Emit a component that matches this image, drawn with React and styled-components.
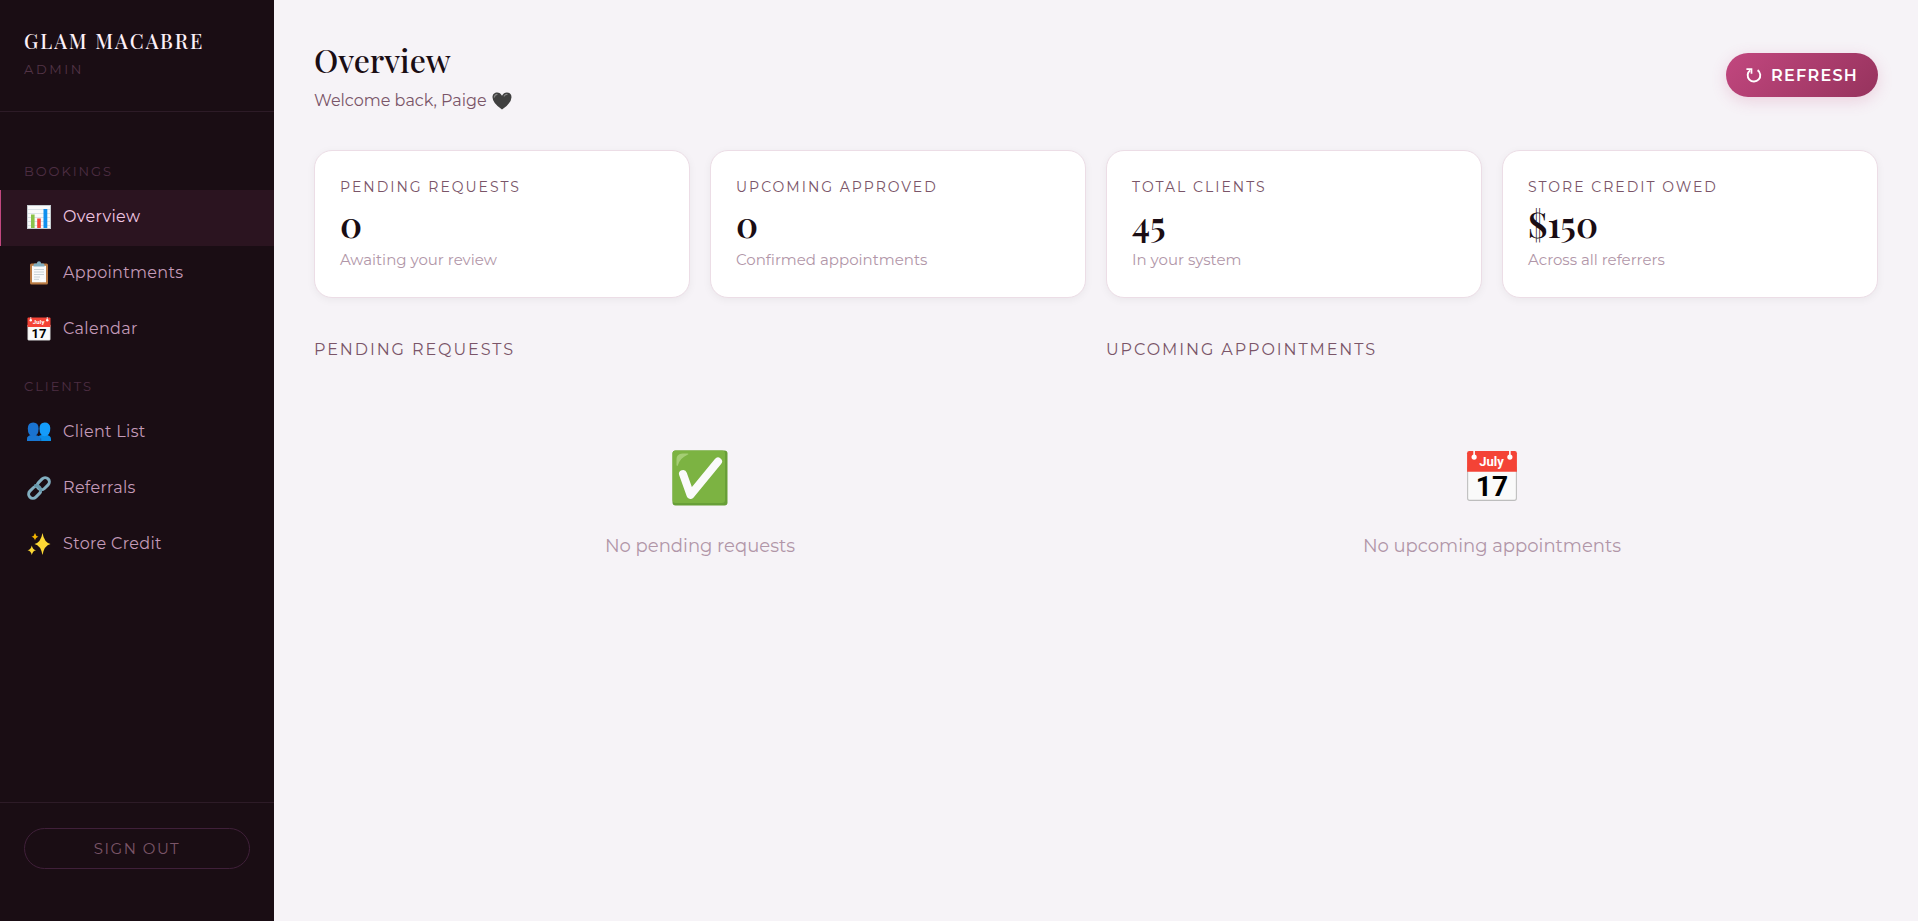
import React, { useState } from 'react'
import styled, { createGlobalStyle } from 'styled-components'

const sans = `Montserrat, Inter, sans-serif`
const serif = `'Playfair Display', 'Liberation Serif', serif`

const ChartIcon = () => (
  <svg viewBox="0 0 24 24" aria-hidden="true">
    <rect x="0.5" y="0.5" width="23" height="23" fill="#fafafa" stroke="#c5ccd0" />
    <path d="M1 4.5h22M1 8.5h22M1 12.5h22M1 16.5h22M1 20.5h22" stroke="#d3dde2" strokeWidth="0.8" />
    <rect x="4" y="9.500" width="3.600" height="13.500" fill="#8bc34a" />
    <rect x="10.200" y="13.500" width="3.600" height="9.500" fill="#f44336" />
    <rect x="16.500" y="4" width="3.800" height="19" fill="#1190ef" />
  </svg>
)

const ClipboardIcon = () => (
  <svg viewBox="0 0 24 24" aria-hidden="true">
    <rect x="3" y="2.500" width="18" height="21" rx="1.500" fill="#b97a43" />
    <rect x="5" y="4.800" width="14" height="16.500" fill="#fafafa" />
    <path d="M7 8.500h10M7 11h10M7 13.500h10M7 16h6M7 18.300h5" stroke="#c3ced3" strokeWidth="0.9" />
    <path d="M14.500 21.300V18h4.500z" fill="#fff" />
    <path d="M6.500 5.500V4q0-1.400 1.700-1.400h1.600q.3-2.300 2.200-2.300t2.200 2.300h1.600q1.700 0 1.700 1.400v1.500z" fill="#82aec0" />
  </svg>
)

const CalendarIcon = () => (
  <svg viewBox="0 0 48 48" aria-hidden="true">
    <path d="M1.500 16h45v28.500a2 2 0 0 1-2 2h-41a2 2 0 0 1-2-2z" fill="#fafafa" stroke="#bdbdbd" strokeWidth="1" />
    <path d="M1 3q0-2 2-2h42q2 0 2 2v17H1z" fill="#f44336" />
    <path d="M7.500 0v6M40.500 0v6" stroke="#fafafa" strokeWidth="1.500" />
    <circle cx="7.500" cy="6.500" r="2.400" fill="#fff" />
    <circle cx="40.500" cy="6.500" r="2.400" fill="#fff" />
    <text x="23.500" y="14.500" textAnchor="middle" fontFamily="Roboto, sans-serif" fontWeight="700" fontSize="12" fill="#fff">July</text>
    <text x="24" y="42.500" textAnchor="middle" fontFamily="Roboto, sans-serif" fontWeight="700" fontSize="26" fill="#000">17</text>
  </svg>
)

const PeopleIcon = () => (
  <svg viewBox="0 0 24 24" aria-hidden="true">
    <path d="M10.500 21v-2.500q0-3 4-3.500 5-1.500 8 1 1.500 1 1.500 3V21z" fill="#0a8de8" />
    <path d="M12.500 8.500q0-6 5.200-6t5.600 5.500q.2 7.800-5.600 8.200-5.200-.2-5.200-7.700z" fill="#149cfa" />
    <path d="M0 21v-2.500q0-2.500 4-3.500h4q5 .8 5.800 3.500V21z" fill="#1976d2" />
    <path d="M.8 8.500q0-6 5.400-6t5.400 6q0 7.700-5.400 7.700T.8 8.500z" fill="#1a73d1" />
    <path d="M13.800 18.500V21" stroke="#14568f" strokeWidth="0.6" />
  </svg>
)

const LinkIcon = () => (
  <svg viewBox="0 0 24 24" aria-hidden="true">
    <g fill="none" strokeLinecap="round" strokeWidth="3">
      <rect x="-4.200" y="-6.800" width="8.400" height="13.600" rx="4.200" transform="translate(7.700 16.300) rotate(45)" stroke="#82aec0" />
      <rect x="-4.200" y="-6.800" width="8.400" height="13.600" rx="4.200" transform="translate(16.300 7.700) rotate(45)" stroke="#82aec0" />
      <path d="M8.500 9.600q4.500.5 5.200 4.900" stroke="#6596aa" />
    </g>
  </svg>
)

const SparklesIcon = () => (
  <svg viewBox="0 0 24 24" aria-hidden="true">
    <path d="M15.500 1Q17.200 10.500 23.500 12 17.200 13.500 15.500 23 13.800 13.500 7.500 12 13.800 10.500 15.500 1z" fill="#fdd835" />
    <path d="M4.800 13.500Q5.600 17.600 9 18.300 5.600 19 4.800 23 4 19 .5 18.300 4 17.600 4.800 13.500z" fill="#fdd835" />
    <path d="M8 1Q8.700 4.200 11.500 4.700 8.700 5.200 8 8.400 7.300 5.200 4.500 4.700 7.300 4.200 8 1z" fill="#f4b400" />
  </svg>
)

const CheckIcon = () => (
  <svg viewBox="0 0 56 56" aria-hidden="true">
    <rect x="0.500" y="0.500" width="55" height="55" rx="3" fill="#689f38" />
    <rect x="0.500" y="0.500" width="52.500" height="52.500" rx="3" fill="#7cb342" />
    <path d="M11 24l7.500 21L46 11.500" fill="none" stroke="#fafafa" strokeWidth="8" strokeLinecap="round" strokeLinejoin="round" />
    <path d="M4.500 15V9q0-5 6-5.500h5q2 .2 0 1.200Q8 8 6 15q-.8 1.800-1.500 0z" fill="#aed581" opacity="0.800" />
  </svg>
)

const HeartIcon = () => (
  <svg viewBox="0 0 20 18" aria-hidden="true">
    <path d="M10 17.500Q.5 11 .5 5.200C.5-.5 8-1.200 10 3.800c2-5 9.500-4.300 9.500 1.400Q19.500 11 10 17.500z" fill="#404040" />
    <path d="M2.300 5.200Q2.800 2.500 5 2.300M12.200 4Q13.300 2.200 15 2.300" fill="none" stroke="#858585" strokeWidth="1.200" strokeLinecap="round" />
  </svg>
)

// open ring with its arrow head at the top left
const RefreshIcon = () => (
  <svg viewBox="0 0 16 16" aria-hidden="true">
    <path d="M4.200 3.200a6.300 6.300 0 1 0 7.400-.1" fill="none" stroke="#fff" strokeWidth="1.900" />
    <path d="M0.400 2.100h5.100v4.600" fill="none" stroke="#fff" strokeWidth="1.700" />
  </svg>
)

const navGroups = [
  {
    title: 'Bookings',
    items: [
      { name: 'Overview', icon: <ChartIcon /> },
      { name: 'Appointments', icon: <ClipboardIcon /> },
      { name: 'Calendar', icon: <CalendarIcon /> },
    ],
  },
  {
    title: 'Clients',
    items: [
      { name: 'Client List', icon: <PeopleIcon /> },
      { name: 'Referrals', icon: <LinkIcon /> },
      { name: 'Store Credit', icon: <SparklesIcon /> },
    ],
  },
]

const stats = [
  { label: 'Pending Requests', value: '0', note: 'Awaiting your review' },
  { label: 'Upcoming Approved', value: '0', note: 'Confirmed appointments' },
  { label: 'Total Clients', value: '45', note: 'In your system' },
  { label: 'Store Credit Owed', value: '$150', note: 'Across all referrers' },
]

export default function App() {
  const [active, setActive] = useState('Overview')

  return (
    <>
      <GlobalStyle />
      <Layout>
        <Sidebar>
          <Brand>
            <BrandName>GLAM MACABRE</BrandName>
            <BrandRole>Admin</BrandRole>
          </Brand>
          <Nav>
            {navGroups.map((group) => (
              <NavGroup key={group.title}>
                <NavTitle>{group.title}</NavTitle>
                {group.items.map((item) => (
                  <NavLink
                    key={item.name}
                    href="#"
                    $active={active === item.name}
                    onClick={() => setActive(item.name)}
                  >
                    {item.icon}
                    {item.name}
                  </NavLink>
                ))}
              </NavGroup>
            ))}
          </Nav>
          <SidebarFooter>
            <SignOutButton type="button">Sign Out</SignOutButton>
          </SidebarFooter>
        </Sidebar>

        <Main>
          <Header>
            <div>
              <Title>Overview</Title>
              <Welcome>Welcome back, Paige <HeartIcon /></Welcome>
            </div>
            <RefreshButton type="button"><RefreshIcon />Refresh</RefreshButton>
          </Header>

          <StatGrid>
            {stats.map((stat) => (
              <StatCard key={stat.label}>
                <StatLabel>{stat.label}</StatLabel>
                <StatValue>{stat.value}</StatValue>
                <StatNote>{stat.note}</StatNote>
              </StatCard>
            ))}
          </StatGrid>

          <Panels>
            <section>
              <SectionTitle>Pending Requests</SectionTitle>
              <EmptyState>
                <EmptyIcon $size={56}><CheckIcon /></EmptyIcon>
                <p>No pending requests</p>
              </EmptyState>
            </section>
            <section>
              <SectionTitle>Upcoming Appointments</SectionTitle>
              <EmptyState>
                <EmptyIcon $size={52}><CalendarIcon /></EmptyIcon>
                <p>No upcoming appointments</p>
              </EmptyState>
            </section>
          </Panels>
        </Main>
      </Layout>
    </>
  )
}

const GlobalStyle = createGlobalStyle`
  * {
    box-sizing: border-box;
    margin: 0;
    padding: 0;
  }
  body {
    background: #f6f3f7;
    font-family: ${sans};
    color: #1a0d14;
  }
  button {
    font-family: inherit;
    cursor: pointer;
  }
`;

const Layout = styled.div`
  display: flex;
  min-height: 100vh;
`;

const Sidebar = styled.aside`
  display: flex;
  flex-direction: column;
  flex: 0 0 274px;
  background: #1a0d14;
`;

const Brand = styled.div`
  padding: 28px 24px 32px;
  border-bottom: 1px solid #2d1b27;
`;

const BrandName = styled.div`
  font-family: ${serif};
  font-size: 20px;
  font-weight: 500;
  line-height: 26px;
  letter-spacing: 2px;
  color: #fdf0f8;
`;

const BrandRole = styled.div`
  margin-top: 5px;
  font-size: 13px;
  line-height: 20px;
  letter-spacing: 0.2em;
  text-transform: uppercase;
  color: #533447;
`;

const Nav = styled.nav`
  flex: 1;
  padding-top: 31px;
`;

const NavGroup = styled.div`
  padding-top: 20px;
`;

const NavTitle = styled.h2`
  padding: 0 24px;
  margin-bottom: 11px;
  font-size: 13px;
  font-weight: 400;
  line-height: 16px;
  letter-spacing: 0.15em;
  text-transform: uppercase;
  color: #4d2e43;
`;

const NavLink = styled.a`
  display: flex;
  align-items: center;
  gap: 12px;
  height: 56px;
  padding: 0 26px 2px;
  border-left: 1px solid ${({ $active }) => ($active ? '#c2477f' : 'transparent')};
  background: ${({ $active }) => ($active ? '#2b1420' : 'transparent')};
  color: ${({ $active }) => ($active ? '#f0c4e0' : '#c49ab8')};
  font-size: 16px;
  line-height: 20px;
  letter-spacing: 0.02em;
  text-decoration: none;
  svg {
    width: 24px;
    height: 24px;
  }
`;

const SidebarFooter = styled.div`
  padding: 25px 24px 52px;
  border-top: 1px solid #2d1b27;
`;

const SignOutButton = styled.button`
  width: 100%;
  height: 41px;
  border: 1px solid #40203a;
  border-radius: 21px;
  background: transparent;
  color: #7a5568;
  font-size: 15px;
  letter-spacing: 0.1em;
  text-transform: uppercase;
`;

const Main = styled.main`
  flex: 1;
  min-width: 0;
  padding: 39px 40px 40px;
`;

const Header = styled.header`
  display: flex;
  align-items: center;
  justify-content: space-between;
  margin-bottom: 39px;
`;

const Title = styled.h1`
  font-family: ${serif};
  font-size: 32px;
  font-weight: 500;
  line-height: 42px;
`;

const Welcome = styled.p`
  display: flex;
  align-items: center;
  gap: 5px;
  margin-top: 10px;
  font-size: 16px;
  line-height: 20px;
  color: #7a5568;
  svg {
    width: 20px;
    height: 18px;
  }
`;

const RefreshButton = styled.button`
  display: flex;
  align-items: center;
  gap: 9px;
  height: 44px;
  padding: 0 20px;
  border: 0;
  border-radius: 22px;
  background: linear-gradient(135deg, #c2477f, #96335d);
  box-shadow: 0 4px 16px rgba(194, 71, 127, 0.2);
  color: #fff;
  font-size: 16px;
  font-weight: 600;
  letter-spacing: 0.08em;
  text-transform: uppercase;
  svg {
    width: 16px;
    height: 16px;
  }
`;

const StatGrid = styled.div`
  display: grid;
  grid-template-columns: repeat(4, 1fr);
  gap: 20px;
  margin-bottom: 40px;
`;

const StatCard = styled.div`
  padding: 26px 25px 27px;
  border: 1px solid #ecdde6;
  border-radius: 18px;
  background: #fff;
  box-shadow: 0 2px 8px rgba(26, 13, 20, 0.05);
`;

const StatLabel = styled.div`
  font-size: 14px;
  line-height: 20px;
  letter-spacing: 2px;
  text-transform: uppercase;
  color: #7a5568;
`;

const StatValue = styled.div`
  margin: 7px 0 6px;
  font-family: ${serif};
  font-size: 35px;
  font-weight: 600;
  line-height: 40px;
`;

const StatNote = styled.div`
  font-size: 15px;
  line-height: 20px;
  color: #b196a8;
`;

const Panels = styled.div`
  display: grid;
  grid-template-columns: repeat(2, 1fr);
  gap: 20px;
`;

const SectionTitle = styled.h2`
  font-size: 16px;
  font-weight: 400;
  line-height: 24px;
  letter-spacing: 0.12em;
  text-transform: uppercase;
  color: #7a5568;
`;

const EmptyState = styled.div`
  display: flex;
  flex-direction: column;
  align-items: center;
  padding: 88px 20px;
  p {
    font-size: 18px;
    line-height: 24px;
    color: #b196a8;
  }
`;

const EmptyIcon = styled.div`
  height: 56px;
  margin-bottom: 28px;
  svg {
    width: ${({ $size }) => $size}px;
    height: ${({ $size }) => $size}px;
  }
`;
